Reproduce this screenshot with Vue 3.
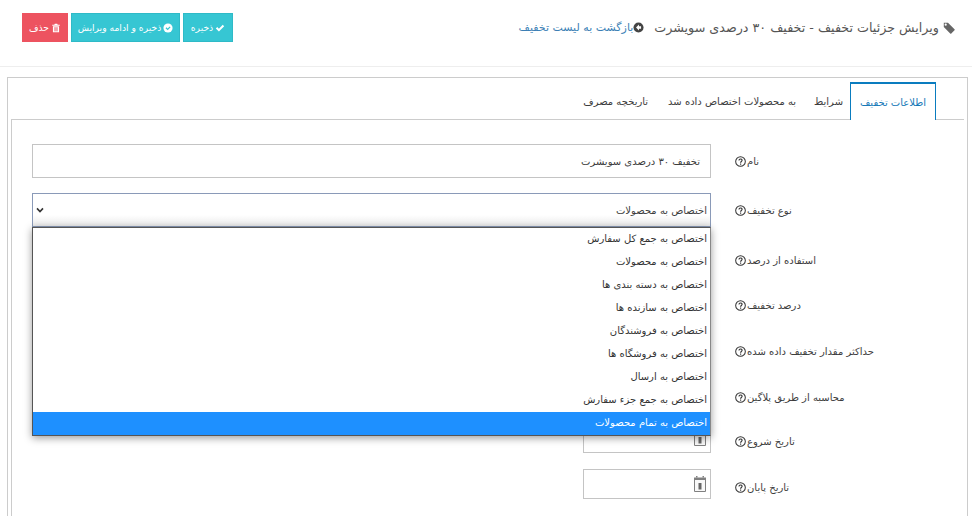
<script setup>
const tabs = [
  { label: 'اطلاعات تخفیف', active: true },
  { label: 'شرایط' },
  { label: 'به محصولات اختصاص داده شد' },
  { label: 'تاریخچه مصرف' }
]
const rows = [
  { label: 'نام', h: 49, kind: 'name' },
  { label: 'نوع تخفیف', h: 50, kind: 'select' },
  { label: 'استفاده از درصد', h: 45 },
  { label: 'درصد تخفیف', h: 46 },
  { label: 'حداکثر مقدار تخفیف داده شده', h: 46 },
  { label: 'محاسبه از طریق پلاگین', h: 44 },
  { label: 'تاریخ شروع', h: 46, kind: 'date' },
  { label: 'تاریخ پایان', h: 46, kind: 'date' }
]
const options = [
  'اختصاص به جمع کل سفارش',
  'اختصاص به محصولات',
  'اختصاص به دسته بندی ها',
  'اختصاص به سازنده ها',
  'اختصاص به فروشندگان',
  'اختصاص به فروشگاه ها',
  'اختصاص به ارسال',
  'اختصاص به جمع جزء سفارش',
  'اختصاص به تمام محصولات'
]
</script>

<template>
  <div class="page" dir="rtl">
    <header class="head">
      <div class="title">
        <svg class="ic-tag" viewBox="0 0 12 12"><path d="M11.500 7.200 5 .8H.8v4.300l6.400 6.400a.8.8 0 0 0 1.100 0l3.200-3.200a.8.8 0 0 0 0-1.100zM2.700 3.800a1.100 1.100 0 1 1 0-2.200 1.100 1.100 0 0 1 0 2.200z" fill="#666"/></svg>
        <span class="title-text">ویرایش جزئیات تخفیف - تخفیف ۳۰ درصدی سویشرت</span>
        <svg class="ic-back" viewBox="0 0 12 12"><circle cx="6" cy="6" r="5.500" fill="#444"/><path d="M6.500 2.800 3.300 6l3.200 3.200V7.300h2.300V4.700H6.500z" fill="#fff"/></svg>
        <a class="back">بازگشت به لیست تخفیف</a>
      </div>
      <div class="actions">
        <button class="btn teal save">
          <svg class="ic-btn" viewBox="0 0 12 12"><path d="M1 6.500 2.700 4.800 4.700 6.800 9.300 2.200 11 3.900 4.700 10.200z" fill="#fff"/></svg>
          <span>ذخیره</span>
        </button>
        <button class="btn teal save-edit">
          <svg class="ic-btn" viewBox="0 0 12 12"><circle cx="6" cy="6" r="5.500" fill="#fff"/><path d="m3 6.200 1.100-1.100 1.500 1.500 2.400-2.500L9.100 5.200 5.600 8.700z" fill="#36c6d3"/></svg>
          <span>ذخیره و ادامه ویرایش</span>
        </button>
        <button class="btn red">
          <svg class="ic-btn" viewBox="0 0 12 12"><path d="M4.500 1h3l.5 1h2.500v1.300h-9V2H4zM2.300 4h7.400v7.200H2.300z" fill="#fff"/><path d="M3.700 5h4.600v5H3.700z" fill="#f3a3ab"/></svg>
          <span>حذف</span>
        </button>
      </div>
    </header>
    <hr class="rule" />
    <section class="outer">
      <nav class="tabs">
        <a v-for="t in tabs" :key="t.label" class="tab" :class="{ active: t.active }">{{ t.label }}</a>
      </nav>
      <div class="pane">
        <div class="form">
          <div v-for="r in rows" :key="r.label" class="row" :style="{ height: r.h + 'px' }">
            <label class="label">
              <span>{{ r.label }}</span>
              <svg class="ic-help" viewBox="0 0 13 13"><circle cx="6.500" cy="6.500" r="5.700" fill="none" stroke="#333" stroke-width="1.200"/><path d="M4.700 5.200c0-2.300 3.700-2.300 3.700-.1 0 1.400-1.800 1.400-1.800 2.900" fill="none" stroke="#333" stroke-width="1.300"/><path d="M6 8.900h1.300v1.300H6z" fill="#333"/></svg>
            </label>
            <div v-if="r.kind === 'name'" class="input wide">تخفیف ۳۰ درصدی سویشرت</div>
            <div v-else-if="r.kind === 'select'" class="select-wrap">
              <div class="select">
                <span>اختصاص به محصولات</span>
                <svg class="ic-chev" viewBox="0 0 10 8"><path d="M1 1.800 5 6l4-4.200" fill="none" stroke="#333" stroke-width="2.200"/></svg>
              </div>
              <ul class="menu">
                <li v-for="(o, i) in options" :key="o" :class="{ sel: i === options.length - 1 }">{{ o }}</li>
              </ul>
            </div>
            <div v-else-if="r.kind === 'date'" class="input date">
              <svg class="ic-cal" viewBox="0 0 12 16"><path d="M.5 2.500h11v13H.500z" fill="#f8f8f8" stroke="#808080"/><path d="M0 1.500h12V4H0z" fill="#808080"/><path d="M2 0h1.500v1.500H2zM8.500 0H10v1.500H8.500z" fill="#808080"/><path d="M4.500 7h3v6.500h-3z" fill="#666"/></svg>
            </div>
          </div>
        </div>
      </div>
    </section>
  </div>
</template>

<style>
html, body { margin: 0; background: #fff; }
</style>

<style scoped>
.page {
  width: 972px;
  height: 516px;
  overflow: hidden;
  box-sizing: border-box;
  background: #fff;
  font-family: "DejaVu Sans", "Noto Sans", sans-serif;
  font-size: 10px;
  color: #3d3d3d;
}
.head {
  display: flex;
  justify-content: space-between;
  align-items: flex-start;
  height: 66px;
  box-sizing: border-box;
  padding: 13px 17px 0 22px;
}
.title {
  display: flex;
  align-items: center;
  height: 29px;
  font-size: 12.700px;
  color: #555;
}
.ic-tag { width: 12px; height: 12px; margin-left: 4px; }
.ic-back { width: 11px; height: 11px; margin: 0 10px 0 0; flex: none; }
.back { font-size: 11px; color: #3c7fb5; }
.actions { display: flex; gap: 3px; }
.btn {
  width: 46px;
  height: 29px;
  box-sizing: border-box;
  padding: 0;
  display: flex;
  align-items: center;
  justify-content: center;
  gap: 2px;
  border: 1px solid #2fbac7;
  color: #fff;
  font: inherit;
  font-size: 9.200px;
  white-space: nowrap;
}
.save { width: 50px; }
.save-edit { width: 109px; }
.teal { background: #36c6d3; }
.red { background: #ed5360; border-color: #ed5360; }
.ic-btn { width: 10px; height: 10px; flex: none; }
.rule { margin: 0 0 10px; border: 0; border-top: 1px solid #eee; }
.outer {
  margin-left: 7px;
  margin-right: 4px;
  border: 1px solid #ccc;
  padding: 4px 3px 0 3px;
  height: 460px;
  box-sizing: border-box;
}
.tabs {
  display: flex;
  height: 38px;
  box-sizing: border-box;
  padding-right: 28px;
  margin-bottom: -1px;
}
.tab {
  display: flex;
  align-items: center;
  padding: 0 10px;
  font-size: 10px;
  color: #3d3d3d;
  white-space: nowrap;
}
.tab:nth-child(2) { padding: 0 7px 0 8px; }
.tab.active {
  padding: 0 9px;
  color: #1679b8;
  border: 1px solid #0a7cbf;
  border-width: 2px 1px 0 1px;
  background: #fff;
  position: relative;
  z-index: 1;
}
.pane {
  border: 1px solid #ccc;
  border-width: 1px 0 0 1px;
  padding: 24px 0 0 20px;
  height: 400px;
  box-sizing: border-box;
}
.form { display: flex; flex-direction: column; }
.row { display: flex; align-items: flex-start; }
.label {
  width: 253px;
  flex: none;
  box-sizing: border-box;
  padding-left: 24px;
  display: flex;
  justify-content: flex-end;
  align-items: center;
  gap: 1px;
  height: 34px;
  font-size: 10px;
  white-space: nowrap;
}
.ic-help { width: 11px; height: 11px; flex: none; }
.input {
  height: 34px;
  box-sizing: border-box;
  border: 1px solid #c4c4c4;
  padding: 0 10px;
  display: flex;
  align-items: center;
  background: #fff;
}
.wide { width: 679px; }
.date { width: 128px; height: 30px; padding: 0 4px; margin-top: -1px; }
.ic-cal { width: 12px; height: 16px; }
.select-wrap { width: 679px; position: relative; }
.select {
  height: 34px;
  box-sizing: border-box;
  border: 1px solid #8a9ab8;
  background: linear-gradient(#fff 65%, #ececec);
  display: flex;
  align-items: center;
  justify-content: space-between;
  padding: 0 3px;
}
.ic-chev { width: 8px; height: 6px; }
.menu {
  position: absolute;
  top: 34px;
  left: 0;
  right: 0;
  margin: 0;
  padding: 0;
  list-style: none;
  background: #fff;
  border: 1px solid #555;
  border-right-color: #888;
  box-shadow: 0 2px 8px rgba(0, 0, 0, .4);
  z-index: 5;
}
.menu li {
  height: 23px;
  line-height: 22px;
  padding: 0 3px;
  color: #333;
}
.menu li.sel { background: #1e90ff; color: #fff; }
</style>
